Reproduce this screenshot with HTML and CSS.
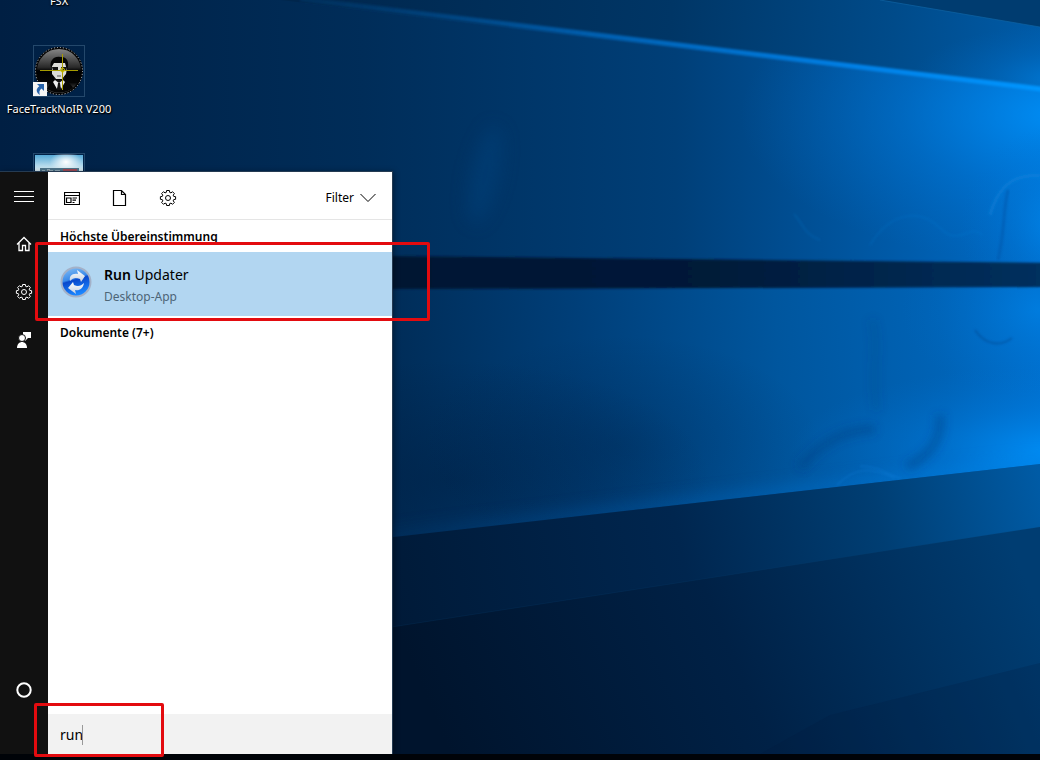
FILE: index.html
```html
<!DOCTYPE html>
<html lang="de">
<head>
<meta charset="utf-8">
<meta name="viewport" content="width=device-width, initial-scale=1">
<title>Desktop</title>
<link rel="stylesheet" href="styles.css">
</head>
<body>
<main class="desktop">
  <svg class="wallpaper" viewBox="0 0 1040 754" preserveAspectRatio="none" aria-hidden="true">
    <defs>
      <linearGradient id="base" x1="0" x2="1"><stop offset="0" stop-color="#001f43"/><stop offset=".35" stop-color="#002d59"/><stop offset=".65" stop-color="#003f78"/><stop offset=".82" stop-color="#00559f"/><stop offset="1" stop-color="#006cc8"/></linearGradient>
      <linearGradient id="top" gradientUnits="userSpaceOnUse" x1="300" y1="0" x2="1040" y2="60"><stop offset="0" stop-color="#00264c"/><stop offset=".5" stop-color="#003666"/><stop offset=".8" stop-color="#004b8a"/><stop offset="1" stop-color="#005ba8"/></linearGradient>
      <linearGradient id="beam" gradientUnits="userSpaceOnUse" x1="290" y1="0" x2="1040" y2="0"><stop offset="0" stop-color="#004078" stop-opacity=".3"/><stop offset=".4" stop-color="#005eae"/><stop offset=".75" stop-color="#0080e6"/><stop offset="1" stop-color="#0096ff"/></linearGradient>
      <linearGradient id="band" gradientUnits="userSpaceOnUse" x1="390" y1="0" x2="1040" y2="0"><stop offset="0" stop-color="#001733"/><stop offset=".5" stop-color="#001a39"/><stop offset="1" stop-color="#00305e"/></linearGradient>
      <linearGradient id="mid" gradientUnits="userSpaceOnUse" x1="390" y1="400" x2="1040" y2="350"><stop offset="0" stop-color="#002c57"/><stop offset=".3" stop-color="#003f79"/><stop offset=".6" stop-color="#00569e"/><stop offset=".85" stop-color="#0063b6"/><stop offset="1" stop-color="#0070ce"/></linearGradient>
      <linearGradient id="low" gradientUnits="userSpaceOnUse" x1="390" y1="620" x2="1040" y2="480"><stop offset="0" stop-color="#001a38"/><stop offset=".45" stop-color="#00264f"/><stop offset=".75" stop-color="#003e73"/><stop offset="1" stop-color="#005ba5"/></linearGradient>
      <linearGradient id="floor" gradientUnits="userSpaceOnUse" x1="450" y1="754" x2="1000" y2="520"><stop offset="0" stop-color="#00142d"/><stop offset=".5" stop-color="#002146"/><stop offset="1" stop-color="#003d72"/></linearGradient>
      <radialGradient id="glow"><stop offset="0" stop-color="#0095ff" stop-opacity=".8"/><stop offset=".5" stop-color="#0080e6" stop-opacity=".35"/><stop offset="1" stop-color="#0070d0" stop-opacity="0"/></radialGradient>
      <radialGradient id="shade"><stop offset="0" stop-color="#001b3c" stop-opacity=".4"/><stop offset="1" stop-color="#001b3c" stop-opacity="0"/></radialGradient>
      <filter id="soft" x="-20%" y="-20%" width="140%" height="140%"><feGaussianBlur stdDeviation="1"/></filter>
      <filter id="haze" x="-100%" y="-40%" width="300%" height="180%"><feGaussianBlur stdDeviation="9"/></filter>
      <filter id="wisp" x="-20%" y="-20%" width="140%" height="140%"><feGaussianBlur stdDeviation="4"/></filter>
      <clipPath id="upper"><path d="M290 -2 1040 89V263L390 256H0V0Z"/></clipPath>
      <clipPath id="lower"><path d="M390 289 1040 287V464L390 537Z"/></clipPath>
      <clipPath id="above"><path d="M280 0H880L1040 27V88L308 0Z"/></clipPath>
    </defs>
    <rect width="1040" height="754" fill="url(#base)"/>
    <path d="M280 0H1040V89Z" fill="url(#top)"/>
    <g clip-path="url(#above)"><ellipse cx="1060" cy="80" rx="150" ry="55" fill="url(#glow)" opacity=".6"/></g>
    <path d="M880 0H1040V27Z" fill="#003c70"/>
    <path d="M880 0 1040 27" stroke="#0f64a4" stroke-width="1" opacity=".7"/>
    <g clip-path="url(#upper)">
      <ellipse cx="1060" cy="115" rx="320" ry="150" fill="url(#glow)"/>
      <ellipse cx="1060" cy="225" rx="100" ry="100" fill="url(#glow)" opacity=".7"/>
      <ellipse cx="485" cy="175" rx="14" ry="50" fill="#034987" opacity=".35" transform="rotate(12 485 175)" filter="url(#haze)"/>
      <g fill="none" stroke="#1287dd" filter="url(#soft)">
        <path d="M990 215C1000 180 1020 174 1040 176" stroke-width="4" opacity=".35"/>
        <path d="M870 245C890 212 920 208 940 228S970 222 982 235M794 214C804 225 804 234 820 240" stroke-width="2" opacity=".15"/>
      </g>
      <path d="M1008 190C1003 210 1005 230 998 260" fill="none" stroke="#0057aa" stroke-width="3" opacity=".5" filter="url(#soft)"/>
    </g>
    <path d="M300 -1 1050 90" stroke="url(#beam)" stroke-width="5" filter="url(#soft)"/>
    <path d="M385 289 1040 287V464L385 538Z" fill="url(#mid)"/>
    <g clip-path="url(#lower)">
      <ellipse cx="450" cy="480" rx="260" ry="120" fill="url(#shade)"/>
      <ellipse cx="620" cy="445" rx="200" ry="110" fill="url(#shade)" opacity=".6"/>
      <ellipse cx="1060" cy="450" rx="270" ry="85" fill="url(#glow)"/>
      <ellipse cx="1040" cy="310" rx="140" ry="90" fill="url(#glow)" opacity=".4"/>
      <path d="M380 540 1045 465" stroke="url(#beam)" stroke-width="12" opacity=".5" filter="url(#haze)"/>
      <g fill="none" stroke="#00407f" filter="url(#wisp)">
        <path d="M800 467C820 445 840 430 875 429M907 467C930 455 942 440 940 415" stroke-width="9" opacity=".4"/>
        <path d="M872 320C880 345 870 380 877 410" stroke-width="7" opacity=".2"/>
      </g>
      <path d="M975 330C985 345 1000 347 1012 338" fill="none" stroke="#004b94" stroke-width="2" opacity=".5" filter="url(#soft)"/>
      <path d="M837 485C855 467 870 467 895 478M860 466C880 466 887 475 901 478" fill="none" stroke="#168be8" stroke-width="2" opacity=".2" filter="url(#soft)"/>
    </g>
    <path d="M385 538 1040 464V754H385Z" fill="url(#low)"/>
    <path d="M385 628 1040 527V754H385Z" fill="url(#floor)"/>
    <path d="M385 628 1040 527" stroke="#084273" opacity=".2"/>
    <path d="M830 715 1040 663V754H760Z" fill="#001b3c" opacity=".2"/>
    <path d="M380 256 1060 263V287L380 289Z" fill="url(#band)" filter="url(#soft)"/>
  </svg>

  <section class="shortcuts" aria-label="Desktop">
    <div class="shortcut"><span class="caption">FSX</span></div>
    <div class="shortcut face">
      <span class="thumb">
        <svg width="50" height="50" viewBox="0 0 50 50" aria-hidden="true">
          <defs><linearGradient id="orb" x2="0" y2="1"><stop stop-color="#8b8b8b"/><stop offset=".42" stop-color="#292929"/><stop offset=".5" stop-color="#000"/><stop offset=".75" stop-color="#050505"/><stop offset="1" stop-color="#777"/></linearGradient></defs>
          <circle cx="25" cy="25" r="23" fill="url(#orb)" stroke="#040404" stroke-width="2"/>
          <circle cx="25" cy="25" r="23.500" fill="none" stroke="#c9ced2" stroke-width="1" stroke-dasharray="1 2"/>
          <path d="M13 43C16 36 19 35 22 32H29C32 36 37 37 39 42C31 48 21 48 13 43Z" fill="#050505"/>
          <path d="M18 19C18 15 21 13 25 13S33 16 33 22L32 28 28 33H22L18 28Z" fill="#dcdcd8"/>
          <path d="M17 22C15 15 20 10 26 11C33 10 36 16 33 24L31 17 20 17Z" fill="#050505"/>
          <path d="M18 21H24L24 25H19ZM27 21H33L32 25H28Z" fill="#111"/><path d="M23 30H27" stroke="#555"/><path d="M20 31 22 34H28L31 30 31 33 25 36 20 34Z" fill="#111"/>
          <path d="M21 34 19 36 23 43 25 38 27 43 31 36 29 34 25 37Z" fill="#eee"/><path d="M24 37H26L27 44H23Z" fill="#111"/>
          <path d="M6 24.500H44M28.500 8V44" stroke="#a79c00" stroke-width="1"/><circle cx="28.500" cy="24" r="2" fill="none" stroke="#cbbf00"/>
        </svg>
        <svg class="link-mark" width="14" height="14" viewBox="0 0 14 14" aria-hidden="true"><path fill="#f5f5f5" d="M0 0H14V14H0Z"/><path d="M4 2H11V9L8.500 6.500C6 8.500 6 10.500 7 13C3 10.500 2.500 7 6.300 4.300Z" fill="#2863aa"/></svg>
      </span>
      <span class="caption">FaceTrackNoIR V200</span>
    </div>
    <div class="shortcut">
      <span class="thumb">
        <svg width="50" height="50" viewBox="0 0 50 50" aria-hidden="true">
          <defs><linearGradient id="sky" x2="0" y2="1"><stop stop-color="#55a9d6"/><stop offset=".3" stop-color="#d8edf5"/><stop offset="1" stop-color="#87b6ce"/></linearGradient><radialGradient id="sun"><stop stop-color="#fff"/><stop offset="1" stop-color="#fff" stop-opacity="0"/></radialGradient></defs>
          <path d="M1 1H49V50H1Z" fill="url(#sky)"/><ellipse cx="32" cy="8" rx="16" ry="11" fill="url(#sun)"/>
          <path d="M6 14H45V30H6Z" fill="#50778d"/><path d="M8 17H11M13 16H16V18M18 16V19M21 17H26" stroke="#d5e5eb"/><path d="M29 15H43V20H29Z" fill="#a44c58"/>
        </svg>
      </span>
    </div>
  </section>

  <section class="search-panel" aria-label="Suche">
    <nav class="rail" aria-label="Startmenü">
      <button aria-label="Menü"><svg width="20" height="20" viewBox="0 0 20 20"><path d="M0 5.500H20M0 10.500H20M0 15.500H20"/></svg></button>
      <button aria-label="Startseite"><svg width="16" height="16" viewBox="0 0 16 16"><path d="M1 8.500 8 1.500 15 8.500M3 7V14.500H6.500V9.500H9.500V14.500H13V7" stroke-width="1.300"/></svg></button>
      <button aria-label="Einstellungen"><svg width="18" height="18" viewBox="0 0 18 18"><use href="#gear"/></svg></button>
      <button aria-label="Feedback"><svg class="filled" width="16" height="18" viewBox="0 0 16 18"><path d="M7 1H15V7H12L9 10V7H7Z"/><circle cx="6" cy="7" r="3.500" stroke="#111"/><path d="M1 17C1 9 11 9 11 17Z"/></svg></button>
      <button class="cortana" aria-label="Cortana"><svg width="18" height="18" viewBox="0 0 18 18"><circle cx="9" cy="9" r="6.700" stroke-width="2"/></svg></button>
    </nav>
    <div class="results">
      <header class="filters">
        <button aria-label="Apps"><svg width="16" height="16" viewBox="0 0 16 16"><path d="M.5 2.500H15.500V14.500H.5ZM.5 5.500H15.500M2.500 8H7V12.500H2.500ZM8.500 8H13M8.500 10.200H12M8.500 12.500H10.500" stroke-width="1.200"/></svg></button>
        <button aria-label="Dokumente"><svg width="16" height="18" viewBox="0 0 16 18"><path d="M1.500 1.500H9.500L13.500 5.500V16.500H1.500ZM9.500 1.500V5.500H13.500" stroke-width="1.200"/></svg></button>
        <button aria-label="Einstellungen"><svg width="18" height="18" viewBox="0 0 18 18"><g id="gear" stroke-width="1"><path d="M7.600 1.500H10.400L10.700 3.400 12 3.900 13.500 2.700 15.400 4.600 14.200 6.100 14.700 7.400 16.600 7.700V10.300L14.700 10.600 14.200 11.900 15.400 13.400 13.500 15.300 12 14.100 10.700 14.600 10.400 16.500H7.600L7.300 14.600 6 14.100 4.500 15.300 2.600 13.400 3.800 11.900 3.300 10.600 1.400 10.300V7.700L3.300 7.400 3.800 6.100 2.600 4.600 4.500 2.700 6 3.900 7.300 3.400Z"/><circle cx="9" cy="9" r="2.500"/></g></svg></button>
        <button class="filter-button">Filter <svg width="16" height="10" viewBox="0 0 16 10"><path d="M.5 1 8 8.500 15.500 1"/></svg></button>
      </header>
      <h2 class="group-title">Höchste Übereinstimmung</h2>
      <button class="best-match">
        <svg width="32" height="32" viewBox="0 0 32 32" aria-hidden="true">
          <defs><linearGradient id="blue" x2=".3" y2="1"><stop stop-color="#8cc4f5"/><stop offset=".46" stop-color="#3a8aea"/><stop offset=".52" stop-color="#0a48cc"/><stop offset="1" stop-color="#1a86ff"/></linearGradient><linearGradient id="silver" x2="0" y2="1"><stop stop-color="#fff"/><stop offset="1" stop-color="#c3d0e2"/></linearGradient></defs>
          <circle cx="16" cy="16" r="14.500" fill="url(#blue)" stroke="#a3b1c8" stroke-width="2"/>
          <path d="M10 15C9 10 12 7 18 8L17 4 25 10 21 16 20 13C15 11 13 12 10 15Z" fill="url(#silver)"/>
          <path d="M24 17C23 23 19 25 15 24L16 28 8 22 13 16 14 19C18 21 21 20 24 17Z" fill="url(#silver)"/>
        </svg>
        <span class="match-text"><span class="match-name"><b>Run</b> Updater</span><span class="match-kind">Desktop-App</span></span>
      </button>
      <h2 class="group-title">Dokumente (7+)</h2>
      <label class="query"><input type="text" value="run" aria-label="Suchen" size="3"><span class="caret"></span></label>
    </div>
  </section>
</main>
<footer class="taskbar"></footer>
<div class="marker marker-result"></div>
<div class="marker marker-query"></div>
</body>
</html>
```
FILE: styles.css
```css
* { box-sizing: border-box; }
body {
  position: relative;
  display: flex;
  flex-direction: column;
  min-height: 100vh;
  margin: 0;
  overflow: hidden;
  background: #001b3c;
  color: #000;
  font: 14px/20px "Noto Sans", "Open Sans", sans-serif;
}
button {
  display: flex;
  align-items: center;
  justify-content: center;
  padding: 0;
  border: 0;
  background: none;
  color: inherit;
  font: inherit;
}
svg { display: block; flex: none; }
.desktop {
  position: relative;
  display: flex;
  flex: 1;
  overflow: hidden;
}
.wallpaper {
  position: absolute;
  inset: 0;
  width: 100%;
  height: 100%;
}
.taskbar { height: 6px; background: #000308; }

.shortcuts {
  position: absolute;
  top: -7px;
  left: 0;
  display: flex;
  flex-direction: column;
  width: 118px;
}
.shortcut {
  display: flex;
  flex-direction: column;
  align-items: center;
  gap: 4px;
}
.shortcut.face { padding: 36px 0; }
.thumb {
  position: relative;
  border: 1px solid #24486b;
}
.link-mark {
  position: absolute;
  bottom: 0;
  left: -1px;
}
.caption {
  color: #fff;
  font-size: 11px;
  line-height: 16px;
  white-space: nowrap;
  text-shadow: 0 1px 2px #000, 1px 1px 1px #000;
}

.search-panel {
  position: relative;
  display: flex;
  width: 392px;
  margin-top: 172px;
  box-shadow: 0 0 0 1px #253b52, 2px 0 6px #0006;
}
.rail {
  display: flex;
  flex-direction: column;
  width: 48px;
  padding-bottom: 40px;
  background: #111;
  color: #fff;
}
.rail button { height: 48px; }
.rail svg, .filters svg { fill: none; stroke: currentColor; }
.rail .filled { fill: #fff; stroke: none; }
.rail .cortana { margin-top: auto; }
.results {
  display: flex;
  flex: 1;
  flex-direction: column;
  background: #fff;
}
.filters {
  display: flex;
  height: 48px;
  padding-top: 4px;
  border-bottom: 1px solid #e5e5e5;
}
.filters button { width: 48px; }
.filters .filter-button {
  width: auto;
  gap: 6px;
  margin-left: auto;
  padding-right: 16px;
  font-size: 12px;
}
.group-title {
  margin: 0;
  padding: 7px 12px 5px;
  font-size: 12px;
  font-weight: 600;
  line-height: 20px;
}
.best-match {
  justify-content: flex-start;
  gap: 12px;
  height: 64px;
  padding: 0 12px;
  background: #b2d6f1;
  text-align: left;
}
.best-match svg { margin-bottom: 4px; }
.match-text {
  display: flex;
  flex-direction: column;
  gap: 2px;
  padding-top: 4px;
}
.match-name { font-size: 14px; }
.match-name b { font-weight: 600; }
.match-kind { color: #4d6577; font-size: 12px; }
.query {
  display: flex;
  align-items: center;
  height: 40px;
  margin-top: auto;
  padding: 2px 12px 0;
  background: #f2f2f2;
}
.query input {
  width: 22px;
  padding: 0;
  border: 0;
  outline: 0;
  background: none;
  color: #000;
  font: inherit;
}
.caret { width: 1px; height: 20px; background: #999; }

.marker {
  position: absolute;
  border: 3px solid #e30b0f;
  border-radius: 2px;
  pointer-events: none;
}
.marker-result { top: 242px; left: 35px; width: 395px; height: 79px; }
.marker-query { bottom: 3px; left: 34px; width: 130px; height: 54px; }
```
